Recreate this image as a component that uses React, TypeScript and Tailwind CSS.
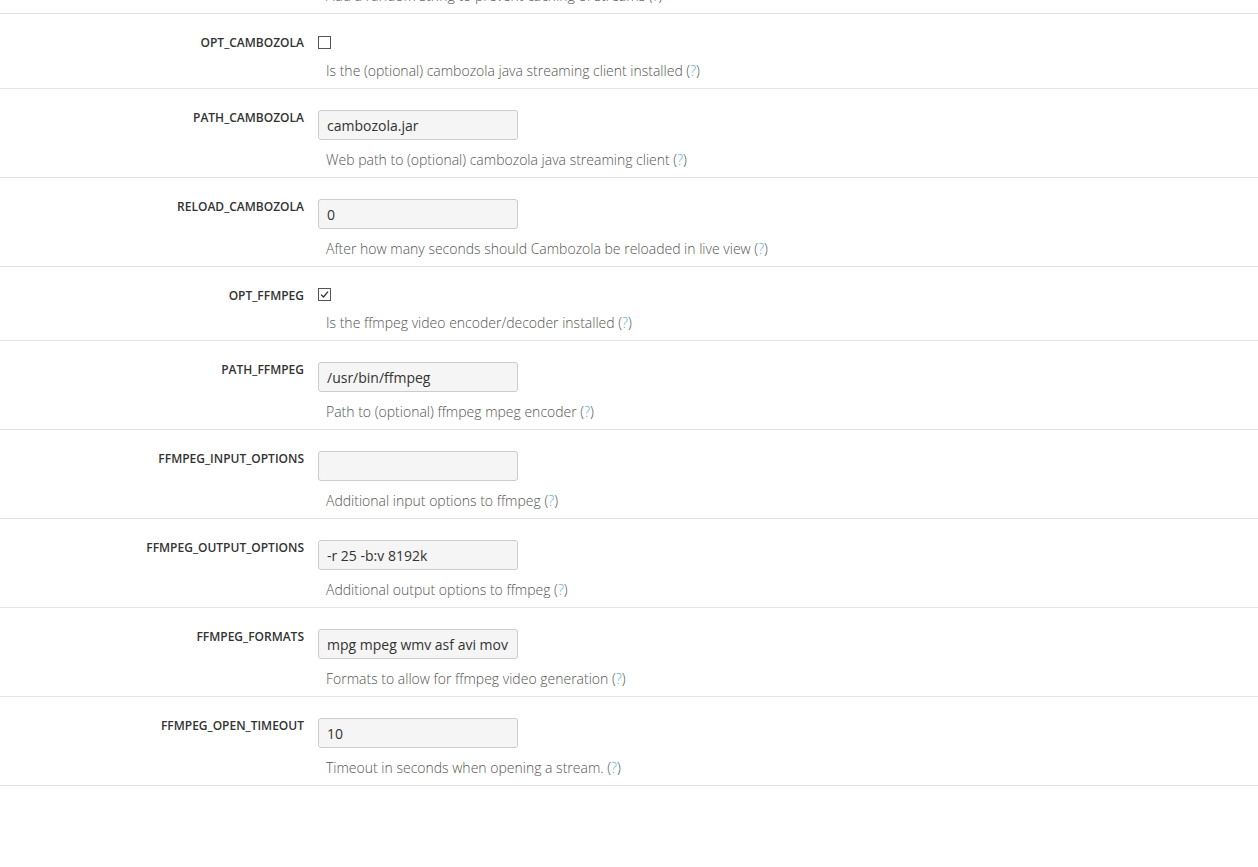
import React from "react";

type Row =
  | { name: string; kind: "check"; checked: boolean; desc: string }
  | { name: string; kind: "text"; value: string; desc: string };

const rows: Row[] = [
  { name: "OPT_CAMBOZOLA", kind: "check", checked: false, desc: "Is the (optional) cambozola java streaming client installed" },
  { name: "PATH_CAMBOZOLA", kind: "text", value: "cambozola.jar", desc: "Web path to (optional) cambozola java streaming client" },
  { name: "RELOAD_CAMBOZOLA", kind: "text", value: "0", desc: "After how many seconds should Cambozola be reloaded in live view" },
  { name: "OPT_FFMPEG", kind: "check", checked: true, desc: "Is the ffmpeg video encoder/decoder installed" },
  { name: "PATH_FFMPEG", kind: "text", value: "/usr/bin/ffmpeg", desc: "Path to (optional) ffmpeg mpeg encoder" },
  { name: "FFMPEG_INPUT_OPTIONS", kind: "text", value: "", desc: "Additional input options to ffmpeg" },
  { name: "FFMPEG_OUTPUT_OPTIONS", kind: "text", value: "-r 25 -b:v 8192k", desc: "Additional output options to ffmpeg" },
  { name: "FFMPEG_FORMATS", kind: "text", value: "mpg mpeg wmv asf avi mov", desc: "Formats to allow for ffmpeg video generation" },
  { name: "FFMPEG_OPEN_TIMEOUT", kind: "text", value: "10", desc: "Timeout in seconds when opening a stream." },
];

function Desc({ text }: { text: string }) {
  return (
    <div className="pl-[8px] text-[14px] leading-[20px] font-light text-[#555] whitespace-nowrap">
      {text} (<span className="text-[#5bb4d8]">?</span>)
    </div>
  );
}

function Check({ checked }: { checked: boolean }) {
  return (
    <div className="h-[15px] flex items-start">
      <div className="w-[13px] h-[13px] border border-[#555] bg-white flex items-center justify-center">
        {checked && (
          <svg width="11" height="11" viewBox="0 0 11 11">
            <path d="M2 5.6 L4.5 8 L9 2.6" fill="none" stroke="#333" strokeWidth="1.3" />
          </svg>
        )}
      </div>
    </div>
  );
}

export default function App() {
  return (
    <div className="w-[1258px] h-[867px] overflow-hidden bg-white" style={{ fontFamily: '"Open Sans", "Liberation Sans", sans-serif' }}>
      <div className="mt-[-14px]">
        <div className="flex border-b border-[#e3e3e3] pb-[7px]">
          <div className="w-[304px] shrink-0" />
          <div className="pl-[14px]">
            <Desc text="Add a random string to prevent caching of streams" />
          </div>
        </div>
        {rows.map((r, i) => (
          <div
            key={r.name}
            className={`flex border-b border-[#e3e3e3] pb-[7px] ${i === 0 ? "pt-[22px]" : "pt-[21px]"}`}
          >
            <div
              className={`w-[304px] shrink-0 text-right text-[12px] leading-[17px] font-semibold text-[#333] ${i === 0 ? "mt-[-2px]" : "mt-[-1px]"}`}
            >
              {r.name}
            </div>
            <div className="pl-[14px] flex flex-col">
              {r.kind === "check" ? (
                <Check checked={r.checked} />
              ) : (
                <input
                  readOnly
                  value={r.value}
                  className="w-[200px] h-[30px] px-[8px] border border-[#ccc] rounded-[3px] bg-[#f5f5f5] text-[14px] text-[#333] outline-none"
                  style={{ fontFamily: '"Open Sans", "Liberation Sans", sans-serif' }}
                />
              )}
              <div className="mt-[10px]">
                <Desc text={r.desc} />
              </div>
            </div>
          </div>
        ))}
      </div>
    </div>
  );
}
